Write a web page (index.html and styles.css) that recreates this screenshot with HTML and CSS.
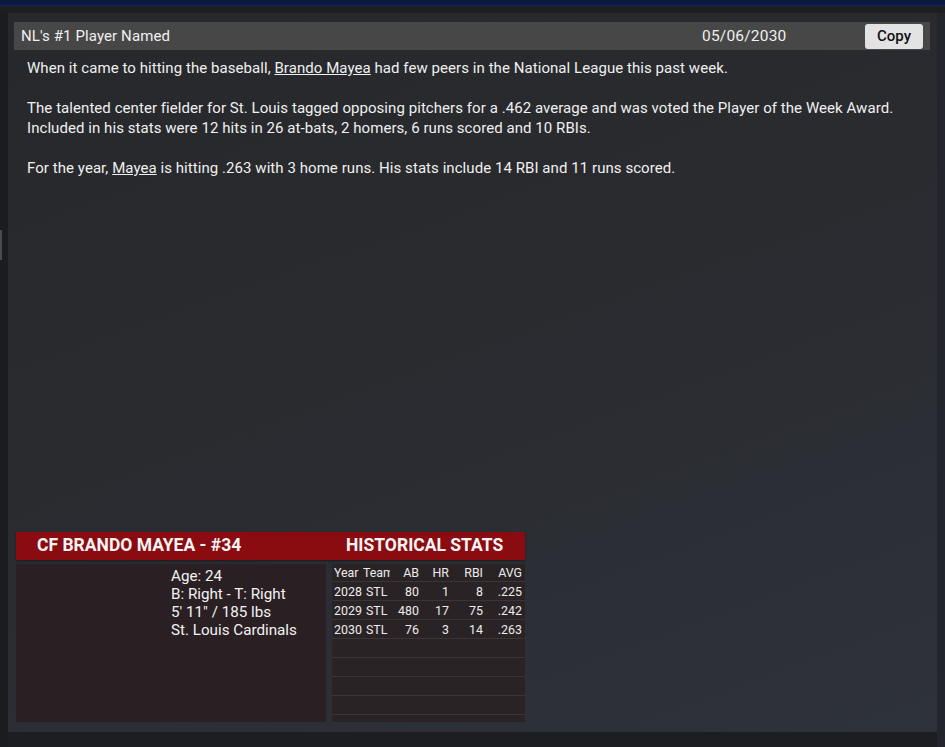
FILE: index.html
```html
<!DOCTYPE html>
<html lang="en">
<head>
    <meta charset="UTF-8">
    <meta name="viewport" content="width=device-width, initial-scale=1.0">
    <title>NL's #1 Player Named</title>
    <link rel="stylesheet" href="styles.css">
</head>
<body>
    <div class="topbar"></div>
    <div class="screen">
        <div class="side-strip"><div class="side-thumb"></div></div>
        <div class="panel">
            <div class="news-header">
                <span class="news-title">NL's #1 Player Named</span>
                <span class="news-date">05/06/2030</span>
                <button class="copy-btn">Copy</button>
            </div>
            <div class="news-body">
                <p>When it came to hitting the baseball, <a href="#">Brando Mayea</a> had few peers in the National League this past week.</p>
                <p>The talented center fielder for St. Louis tagged opposing pitchers for a .462 average and was voted the Player of the Week Award.<br>Included in his stats were 12 hits in 26 at-bats, 2 homers, 6 runs scored and 10 RBIs.</p>
                <p>For the year, <a href="#">Mayea</a> is hitting .263 with 3 home runs. His stats include 14 RBI and 11 runs scored.</p>
            </div>
            <div class="player-card">
                <div class="card-head">
                    <span class="head-name">CF BRANDO MAYEA - #34</span>
                    <span class="head-stats">HISTORICAL STATS</span>
                </div>
                <div class="card-body">
                    <div class="bio">
                        <div>Age: 24</div>
                        <div>B: Right - T: Right</div>
                        <div>5' 11" / 185 lbs</div>
                        <div>St. Louis Cardinals</div>
                    </div>
                    <div class="stats">
                        <table>
                            <tr class="head-row"><th class="yr">Year</th><th class="tm">Team</th><th class="ab">AB</th><th class="hr">HR</th><th class="rbi">RBI</th><th>AVG</th></tr>
                            <tr><td class="yr">2028</td><td class="tm">STL</td><td>80</td><td>1</td><td>8</td><td>.225</td></tr>
                            <tr><td class="yr">2029</td><td class="tm">STL</td><td>480</td><td>17</td><td>75</td><td>.242</td></tr>
                            <tr><td class="yr">2030</td><td class="tm">STL</td><td>76</td><td>3</td><td>14</td><td>.263</td></tr>
                            <tr class="empty"><td colspan="6"></td></tr>
                            <tr class="empty"><td colspan="6"></td></tr>
                            <tr class="empty"><td colspan="6"></td></tr>
                            <tr class="empty"><td colspan="6"></td></tr>
                        </table>
                    </div>
                </div>
            </div>
        </div>
        <div class="side-strip right"></div>
    </div>
</body>
</html>
```

FILE: styles.css
```css
body {
    margin: 0;
    padding: 0;
    background: #1d1e22;
    font-family: Roboto, "Liberation Sans", sans-serif;
    color: #f2f2f2;
    height: 747px;
    overflow: hidden;
}
.topbar {
    height: 5px;
    background: #0b1840;
    border-bottom: 1px solid #14245a;
}
.screen {
    display: flex;
    padding-top: 7px;
}
.side-strip {
    width: 8px;
    background: #1b1c1f;
    height: 740px;
}
.side-thumb {
    margin-top: 217px;
    width: 2px;
    height: 30px;
    background: #4a4b4f;
}
.side-strip.right {
    background: #22252b;
}
.panel {
    width: 916px;
    height: 700px;
    padding: 9px 7px 10px 6px;
    background: linear-gradient(160deg, #27282b 0%, #2a2c31 55%, #2e323b 100%);
    display: flex;
    flex-direction: column;
}
.news-header {
    height: 28px;
    background: #474747;
    display: flex;
    align-items: center;
    padding-left: 7px;
    font-size: 15px;
    color: #f0f0f0;
}
.news-title {
    flex: 1;
    letter-spacing: 0.1px;
}
.news-date {
    width: 163px;
    font-size: 15.5px;
    letter-spacing: 0.2px;
}
.copy-btn {
    width: 58px;
    height: 25px;
    margin-right: 7px;
    border: none;
    border-radius: 3px;
    background: #e3e3e3;
    color: #111;
    font-family: Roboto, "Liberation Sans", sans-serif;
    font-size: 15px;
    font-weight: 500;
    padding: 0;
}
.news-body {
    flex: 1;
    padding: 8px 0 0 13px;
    font-size: 15px;
    letter-spacing: 0.06px;
    line-height: 20px;
    color: #f0f0f0;
}
.news-body p {
    margin: 0 0 20px 0;
}
.news-body a {
    color: #f0f0f0;
    text-decoration: underline;
}
.player-card {
    width: 509px;
    margin-left: 2px;
}
.card-head {
    height: 25px;
    padding-bottom: 3px;
    background: #8a0b10;
    display: grid;
    grid-template-columns: 309px 1fr;
    align-items: center;
    font-weight: 700;
    font-size: 17.5px;
    color: #f4f4f4;
    box-shadow: 0 1px 2px rgba(0,0,0,0.4);
}
.head-name {
    padding-left: 21px;
}
.head-stats {
    padding-left: 21px;
}
.card-body {
    margin-top: 4px;
    height: 158px;
    display: grid;
    grid-template-columns: 310px 193px;
    gap: 6px;
}
.bio {
    background: #2a2023;
    padding: 3px 0 0 155px;
    font-size: 15.2px;
    line-height: 18px;
    color: #f2f2f2;
}
.stats {
    background: #2a2325;
    padding-top: 1px;
    overflow: hidden;
}
.stats table {
    width: 193px;
    border-collapse: collapse;
    table-layout: fixed;
    font-size: 12.4px;
    color: #ececec;
}
.stats th, .stats td {
    box-sizing: border-box;
    height: 19px;
    padding: 0 3px 0 0;
    text-align: right;
    border-bottom: 1px solid #3b3537;
    font-weight: 400;
    white-space: nowrap;
    overflow: hidden;
    text-overflow: clip;
}
.stats .head-row th {
    height: 16px;
    padding-bottom: 1px;
}
.stats .yr {
    width: 30px;
    text-align: left;
    padding: 0 0 0 2px;
}
.stats .tm {
    width: 28px;
    text-align: left;
    padding: 0 0 0 4px;
}
.stats .head-row .tm {
    padding-left: 1px;
}
.stats .ab { width: 32px; }
.stats .hr { width: 30px; }
.stats .rbi { width: 34px; }
```
